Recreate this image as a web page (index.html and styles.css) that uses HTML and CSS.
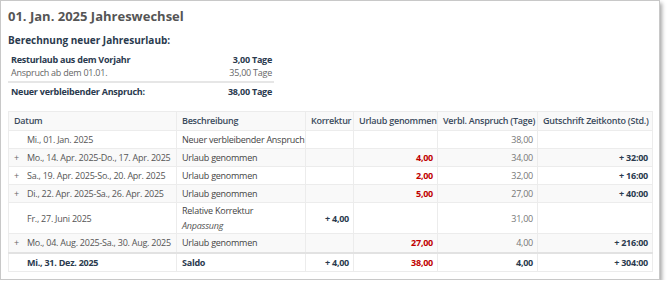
FILE: index.html
```html
<!DOCTYPE html>
<html lang="de">
<head>
<meta charset="utf-8">
<link rel="stylesheet" href="styles.css">
</head>
<body>
<div class="card">
  <h1 class="title">01. Jan. 2025 Jahreswechsel</h1>
  <h2 class="subtitle">Berechnung neuer Jahresurlaub:</h2>
  <table class="summary">
    <tr class="strong"><td>Resturlaub aus dem Vorjahr</td><td class="num">3,00 Tage</td></tr>
    <tr class="muted"><td>Anspruch ab dem 01.01.</td><td class="num">35,00 Tage</td></tr>
    <tr class="strong total"><td>Neuer verbleibender Anspruch:</td><td class="num">38,00 Tage</td></tr>
  </table>
  <table class="grid">
    <colgroup>
      <col class="c-date"><col class="c-desc"><col class="c-korr"><col class="c-url"><col class="c-verbl"><col class="c-gut">
    </colgroup>
    <thead>
      <tr><th>Datum</th><th>Beschreibung</th><th>Korrektur</th><th>Urlaub genommen</th><th>Verbl. Anspruch (Tage)</th><th>Gutschrift Zeitkonto (Std.)</th></tr>
    </thead>
    <tbody>
      <tr><td class="date"><span class="tg"></span>Mi., 01. Jan. 2025</td><td>Neuer verbleibender Anspruch</td><td></td><td></td><td class="num gray">38,00</td><td></td></tr>
      <tr><td class="date"><span class="tg">+</span>Mo., 14. Apr. 2025-Do., 17. Apr. 2025</td><td>Urlaub genommen</td><td></td><td class="num red">4,00</td><td class="num gray">34,00</td><td class="num b">+ 32:00</td></tr>
      <tr><td class="date"><span class="tg">+</span>Sa., 19. Apr. 2025-So., 20. Apr. 2025</td><td>Urlaub genommen</td><td></td><td class="num red">2,00</td><td class="num gray">32,00</td><td class="num b">+ 16:00</td></tr>
      <tr><td class="date"><span class="tg">+</span>Di., 22. Apr. 2025-Sa., 26. Apr. 2025</td><td>Urlaub genommen</td><td></td><td class="num red">5,00</td><td class="num gray">27,00</td><td class="num b">+ 40:00</td></tr>
      <tr class="tall"><td class="date"><span class="tg"></span>Fr., 27. Juni 2025</td><td>Relative Korrektur<br><em>Anpassung</em></td><td class="num b">+ 4,00</td><td></td><td class="num gray">31,00</td><td></td></tr>
      <tr><td class="date"><span class="tg">+</span>Mo., 04. Aug. 2025-Sa., 30. Aug. 2025</td><td>Urlaub genommen</td><td></td><td class="num red">27,00</td><td class="num gray">4,00</td><td class="num b">+ 216:00</td></tr>
    </tbody>
    <tfoot>
      <tr><td class="date b"><span class="tg"></span>Mi., 31. Dez. 2025</td><td class="b">Saldo</td><td class="num b">+ 4,00</td><td class="num red">38,00</td><td class="num b">4,00</td><td class="num b">+ 304:00</td></tr>
    </tfoot>
  </table>
</div>
</body>
</html>
```
FILE: styles.css
```css
html, body { margin: 0; padding: 0; background: #fff; }
body { font-family: "Open Sans", "Noto Sans", sans-serif; color: #333; }
.card {
  width: 660px;
  height: 280px;
  border: 1px solid #c8c8c8;
  box-shadow: 2px 3px 4px rgba(0,0,0,0.35);
  padding: 0 7px;
  box-sizing: border-box;
  background: #fff;
}
.title {
  margin: 0;
  padding-top: 7px;
  font-size: 13px;
  line-height: 16px;
  font-weight: 700;
  color: #555;
}
.subtitle {
  margin: 9px 0 0;
  font-size: 10px;
  line-height: 14px;
  font-weight: 700;
  color: #2a3a4e;
}
.summary {
  margin-top: 6px;
  width: 266px;
  border-collapse: collapse;
  font-size: 9px;
  letter-spacing: -0.25px;
}
.summary td { padding: 0 2px 0 3px; height: 13px; line-height: 13px; }
.summary .num { text-align: right; }
.summary .strong td { font-weight: 700; color: #2a3a4e; }
.summary .muted td { color: #666; padding-bottom: 2px; }
.summary .total td { border-top: 2px solid #e6e6e6; height: 17px; }
.grid {
  margin-top: 11px;
  width: 644px;
  border-collapse: collapse;
  table-layout: fixed;
  font-size: 9px;
  letter-spacing: -0.25px;
  color: #444;
}
.c-date { width: 168px; }
.c-desc { width: 129px; }
.c-korr { width: 48px; }
.c-url { width: 84px; }
.c-verbl { width: 100px; }
.c-gut { width: 115px; }
.grid th, .grid td {
  border: 1px solid #ececec;
  padding: 0 4px 0 5px;
  height: 17px;
  line-height: 14px;
  white-space: nowrap;
  overflow: hidden;
  text-align: left;
}
.grid th { font-weight: 600; color: #3a4a5c; background: #f9f9f9; height: 18px; }
.grid tbody tr:nth-child(even) td { background: #f9f9f9; }
.grid tbody tr.tall td { height: 30px; line-height: 15px; }
.grid tbody tr:last-child td { height: 18px; }
.grid tfoot td { border-top: 2px solid #e2e2e2; height: 17px; }
.grid td.num { text-align: right; }
.grid .date { padding-left: 5px; color: #555; }
.tg { display: inline-block; width: 13px; color: #666; }
.gray { color: #777 !important; }
.red { color: #c00000 !important; font-weight: 700; }
.b { font-weight: 700; color: #2a3a4e !important; }
em { font-style: italic; color: #555; }
```
